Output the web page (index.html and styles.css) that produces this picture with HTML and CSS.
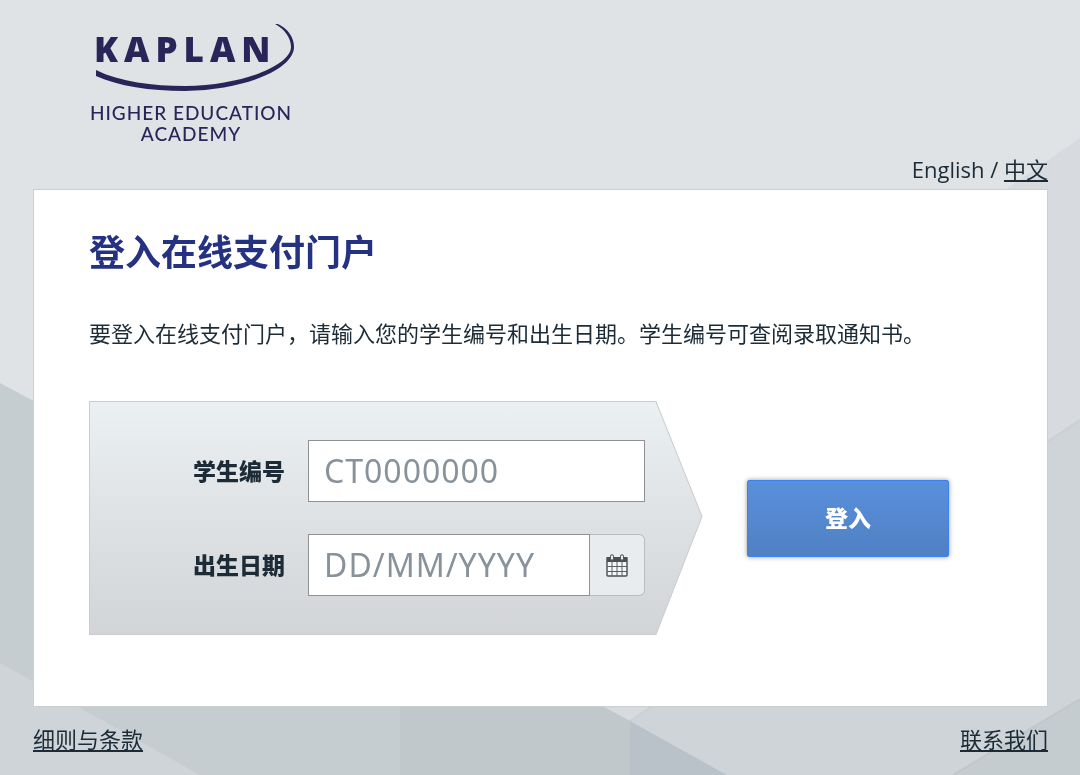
FILE: index.html
```html
<!DOCTYPE html>
<html lang="zh-CN">
<head>
    <meta charset="UTF-8">
    <meta name="viewport" content="width=device-width, initial-scale=1.0">
    <title>登入在线支付门户</title>
    <link rel="stylesheet" href="styles.css">
</head>
<body>
    <svg class="backdrop" viewBox="0 0 1080 775" preserveAspectRatio="xMidYMid slice" aria-hidden="true">
        <rect width="1080" height="775" fill="#dfe3e6"/>
        <path d="M1080 138 L160 775 H1080Z" fill="#d7dbdf"/>
        <path d="M1080 420 L630 721 L727 775 H1080Z" fill="#cfd4d8"/>
        <path d="M1080 420 L630 721" stroke="#cbd0d4" stroke-width="2"/>
        <path d="M0 383 L630 721 V775 H0Z" fill="#c6cdd0"/>
        <path d="M400 598 L630 721 V775 H400Z" fill="#c0c8cb"/>
        <path d="M0 663 L200 775 H0Z" fill="#cfd4d8"/>
        <path d="M630 721 L727 775 H630Z" fill="#bac2c9"/>
        <path d="M1080 699 L953 775 H1080Z" fill="#c5cccf"/>
        <path d="M1080 699 L953 775" stroke="#c1c7cb" stroke-width="2"/>
    </svg>

    <div class="page">
        <header class="header">
            <svg class="logo" viewBox="0 0 212 124" role="img" aria-label="Kaplan Higher Education Academy">
                <path d="M11 48 C35 60 68 64 100 64 C162 63 206 42 206 25 C206 15 199 7 190 2 L193 2 C203 7 209 15 209 25 C209 46 163 68 100 69 C65 69 33 64 11 54Z"/>
                <text class="logo-name" x="9" y="40">KAPLAN</text>
                <text class="logo-sub" x="106" y="98">HIGHER EDUCATION</text>
                <text class="logo-sub" x="106" y="119">ACADEMY</text>
            </svg>
            <nav class="lang">English / <a href="#">中文</a></nav>
        </header>

        <main class="card">
            <h1>登入在线支付门户</h1>
            <p>要登入在线支付门户，请输入您的学生编号和出生日期。学生编号可查阅录取通知书。</p>
            <form class="login">
                <div class="panel">
                    <svg class="panel-shape" viewBox="0 0 613 234" preserveAspectRatio="none" aria-hidden="true">
                        <defs>
                            <linearGradient id="panelFill" x1="0" y1="0" x2="0" y2="1">
                                <stop offset="0" stop-color="#ebf0f3"/>
                                <stop offset="1" stop-color="#d2d4d7"/>
                            </linearGradient>
                        </defs>
                        <path d="M0.5 0.5 H566 L612 115.5 L566 233.5 H0.5Z" fill="url(#panelFill)" stroke="#cccccc"/>
                    </svg>
                    <div class="field">
                        <label for="studentId">学生编号</label>
                        <div class="control">
                            <input type="text" id="studentId" placeholder="CT0000000">
                        </div>
                    </div>
                    <div class="field">
                        <label for="birthDate">出生日期</label>
                        <div class="control">
                            <input type="text" id="birthDate" placeholder="DD/MM/YYYY">
                            <button type="button" class="calendar" aria-label="选择日期">
                                <svg viewBox="0 0 22 23" width="22" height="23">
                                    <path d="M1 4 H21 V21 Q21 22 20 22 H2 Q1 22 1 21Z" fill="#f4f6f7" stroke="#4b4e52" stroke-width="1.4"/>
                                    <path d="M1 3 H21 V8 H1Z" fill="#4b4e52"/>
                                    <path d="M1 12.5 H21 M1 17.5 H21 M6 8 V22 M11 8 V22 M16 8 V22" stroke="#5c6064"/>
                                    <rect x="4.5" y="0.7" width="3" height="5.5" rx="1.5" fill="#e8ecef" stroke="#4b4e52"/>
                                    <rect x="14.5" y="0.7" width="3" height="5.5" rx="1.5" fill="#e8ecef" stroke="#4b4e52"/>
                                </svg>
                            </button>
                        </div>
                    </div>
                </div>
                <button type="submit" class="submit">登入</button>
            </form>
        </main>

        <footer class="footer">
            <a href="#">细则与条款</a>
            <a href="#">联系我们</a>
        </footer>
    </div>
</body>
</html>
```
FILE: styles.css
```css
* {
    box-sizing: border-box;
}
body {
    margin: 0;
    font-family: "Noto Sans", "Noto Sans CJK SC", sans-serif;
    font-size: 22px;
    line-height: 30px;
    color: #1c2b36;
    background-color: #dfe3e6;
}
a {
    color: inherit;
    text-underline-offset: 2px;
}
.backdrop {
    position: fixed;
    top: 0;
    left: 0;
    width: 100%;
    height: 100%;
    z-index: -1;
}
.page {
    padding: 0 32px 0 33px;
}
.header {
    display: flex;
    justify-content: space-between;
    align-items: flex-end;
    padding: 22px 0 5px 52px;
}
.logo {
    width: 212px;
    height: 124px;
    margin-bottom: 38px;
    fill: #2a2559;
}
.logo-name {
    font-family: "Open Sans", sans-serif;
    font-size: 35px;
    font-weight: 800;
    letter-spacing: 6px;
}
.logo-sub {
    font-family: Lato, sans-serif;
    font-size: 19px;
    font-weight: 500;
    letter-spacing: 1px;
    text-anchor: middle;
}
.lang {
    font-family: "Open Sans", "Noto Sans CJK SC", sans-serif;
}
.card {
    padding: 40px 55px 71px;
    background-color: #fff;
    border: 1px solid #cccfd1;
}
h1 {
    margin: 0 0 41px;
    font-size: 36px;
    line-height: 46px;
    font-weight: bold;
    color: #253282;
}
p {
    margin: 0 0 52px;
    line-height: 32px;
}
.login {
    display: flex;
    align-items: center;
    gap: 44px;
}
.panel {
    position: relative;
    flex: 0 1 68%;
    display: flex;
    flex-direction: column;
    gap: 32px;
    padding: 39px 58px 39px 0;
}
.panel-shape {
    position: absolute;
    top: 0;
    left: 0;
    width: 100%;
    height: 100%;
}
.field {
    position: relative;
    display: flex;
    justify-content: flex-end;
    align-items: center;
    gap: 23px;
}
label {
    font-size: 23px;
    font-weight: 900;
}
.control {
    display: flex;
    width: 337px;
    height: 62px;
}
input {
    flex: 1;
    min-width: 0;
    padding: 0 15px 2px;
    font-family: "Noto Sans", sans-serif;
    font-size: 32px;
    letter-spacing: 1px;
    color: #1c2b36;
    background-color: #fff;
    border: 1px solid #8f9193;
    border-radius: 0;
}
input::placeholder {
    color: #89929a;
    opacity: 1;
}
.calendar {
    display: flex;
    justify-content: center;
    align-items: center;
    width: 55px;
    padding: 0;
    background-color: #e8ecef;
    border: 1px solid #babdc0;
    border-left: none;
    border-radius: 0 6px 6px 0;
    cursor: pointer;
}
.submit {
    width: 202px;
    height: 77px;
    padding: 0 0 2px;
    font-family: inherit;
    font-size: 23px;
    font-weight: 900;
    color: #fff;
    background-image: linear-gradient(#5990db, #5080c4);
    border: 1px solid #3a82f0;
    border-radius: 2px;
    box-shadow: 0 0 5px rgba(0, 0, 0, 0.4);
    cursor: pointer;
}
.footer {
    display: flex;
    justify-content: space-between;
    padding-top: 17px;
}
```
